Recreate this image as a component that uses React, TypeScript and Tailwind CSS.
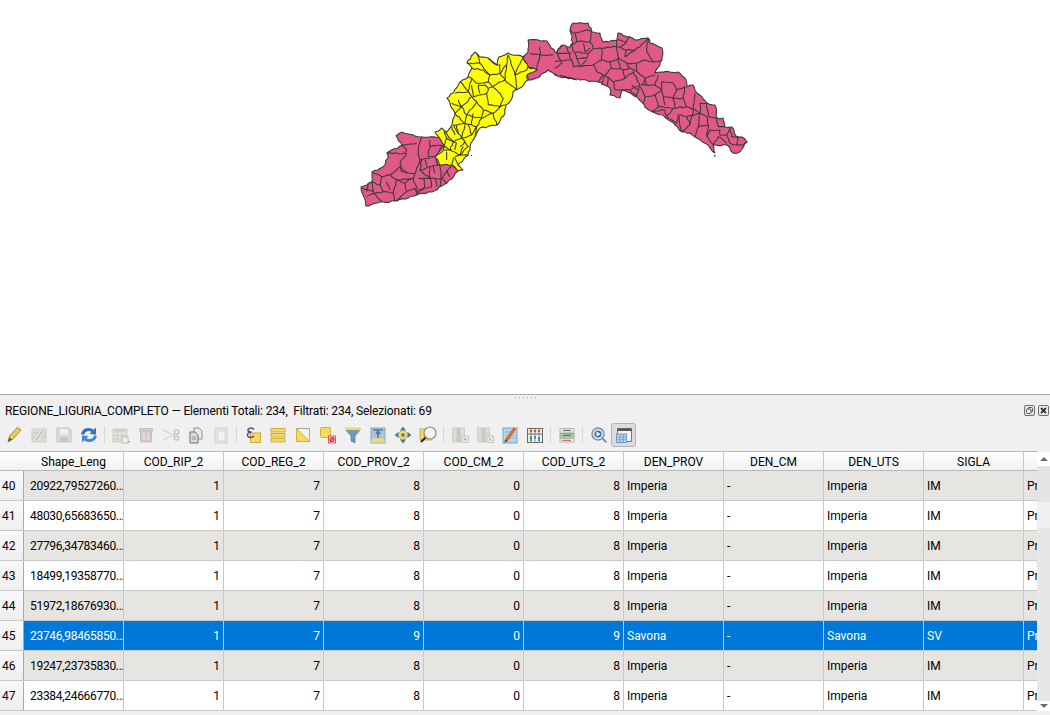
import type { ReactNode } from "react";

const westOutline =
  "361,187 372,182 372,172 383,167 388,158 387,153 402,145 396,136 402,132 415,136 422,137 440,137 444,145 435,157 438,165 452,165 458,171 447,183 432,192 417,195 397,201 383,202 377,203 366,206 364,197";
const yellowOutline =
  "435,157 444,145 435,132 442,128 447,132 452,125 455,113 447,98 453,93 460,82 468,77 472,68 467,63 475,52 480,57 488,58 497,65 499,57 505,55 508,53 523,57 528,67 537,70 527,75 528,80 520,88 513,92 512,98 506,105 505,113 497,125 480,128 475,137 470,147 468,155 458,165 463,170 458,171 452,165 438,165";
const eastOutline =
  "523,57 528,52 528,40 547,41 555,52 557,52 562,45 570,47 573,43 570,30 573,23 588,23 592,32 600,33 603,42 617,40 618,33 630,37 635,40 648,38 650,43 662,48 662,60 655,73 670,72 678,72 685,78 687,87 693,85 697,93 707,103 715,105 717,118 723,118 725,127 732,127 737,137 742,137 747,142 738,153 733,153 727,145 713,145 715,153 708,145 695,137 690,133 682,132 675,125 663,115 653,112 645,107 637,97 623,90 620,98 610,95 610,88 598,82 580,80 560,77 553,73 548,70 537,78 528,80 527,75 537,70 528,67";

// these are in zoomed coordinates, scaled down by the group transform
const westLines = [
  "M140 430L195 430L200 420L185 405L230 400",
  "M200 430L180 460L185 485L225 490L240 450L270 445",
  "M245 380L235 420L240 450",
  "M270 390L265 440L285 440",
  "M270 410L300 405",
  "M97 485L125 500L150 495L180 470",
  "M125 500L120 525L95 515L100 545L65 535",
  "M120 525L130 545L100 550L125 575",
  "M130 545L160 550L165 575",
  "M160 550L170 510L220 505L225 490",
  "M150 495L170 510",
  "M220 505L235 550",
  "M235 540L275 530L270 505L235 505",
  "M245 450L240 480L270 470L295 465",
  "M270 470L270 505L305 505L320 520",
  "M300 470L305 505L335 465",
  "M240 480L270 505",
  "M195 520L200 545L225 535",
  "M200 545L170 572",
  "M225 535L230 555",
  "M235 550L255 530",
  "M250 505L255 530",
  "M285 505L290 530",
  "M305 505L300 530",
  "M320 480L330 500",
  "M215 505L195 520",
  "M170 510L195 520",
  "M180 470L200 490",
  "M100 550L80 560",
  "M140 515L150 540",
  "M290 445L300 470",
  "M255 450L260 470",
  "M280 470L285 490",
  "M85 520L80 545",
];
const yellowLines = [
  "M382 160L420 160L450 195L480 190L480 165L470 165",
  "M395 175L430 180L450 195",
  "M480 190L500 165L505 135",
  "M495 210L500 165",
  "M450 195L445 215L410 220L395 205L385 200",
  "M480 190L495 210L530 240L525 195L560 180",
  "M445 215L470 240L490 265L480 290L497 285",
  "M495 210L445 235L435 225L415 225",
  "M395 205L385 245L345 250",
  "M385 245L395 260L365 290L335 280",
  "M395 225L400 260L440 250L445 285",
  "M415 225L420 250",
  "M440 250L445 235",
  "M445 285L480 290L460 310L430 300L410 275L395 260",
  "M365 290L380 315L410 275",
  "M380 315L375 340L340 345",
  "M375 340L410 350L425 325L460 310",
  "M380 315L425 325",
  "M460 310L470 345",
  "M375 340L365 385L340 345",
  "M365 385L395 375L410 350",
  "M312 365L340 395L365 385L385 410L360 435L330 420L310 420L285 440",
  "M340 395L330 420",
  "M312 365L320 385L310 420",
  "M360 435L340 445L335 465",
  "M385 435L360 435",
  "M320 385L350 400",
  "M560 180L565 170",
  "M345 310L365 290",
  "M345 310L375 340",
  "M335 350L345 375",
  "M350 345L355 370",
  "M300 405L335 420",
  "M345 420L350 400",
  "M375 395L360 410",
  "M385 345L395 375",
  "M400 310L395 345",
  "M430 300L425 325",
  "M355 270L365 290",
  "M420 160L410 130",
  "M470 165L445 145",
  "M525 195L550 140",
  "M505 135L525 195",
  "M360 215L385 245",
  "M410 350L405 380",
  "M360 435L370 410",
  "M320 425L320 450",
  "M355 465L345 445",
];
const eastLines = [
  "M120 60L135 70L170 60L185 65",
  "M135 70L140 95L125 105L130 125L175 130",
  "M140 95L180 95L190 115L215 115",
  "M215 115L215 150L190 165L200 185L220 195L205 215",
  "M175 130L170 145L140 145L135 130",
  "M140 145L150 170L170 150",
  "M215 115L260 110L265 145L240 155L215 150",
  "M260 90L260 110L290 120L315 120L330 110L355 85",
  "M290 95L270 115",
  "M355 85L350 125L370 155L395 150",
  "M265 145L290 160L320 160L340 150L370 155",
  "M320 160L320 185L345 205L375 195",
  "M240 155L245 175L225 195L250 215L285 205L280 180L300 175",
  "M285 205L310 185L330 225L300 240L280 240",
  "M250 215L255 240",
  "M345 205L335 225L375 225L385 195",
  "M375 225L395 240L395 215L430 220L440 240L430 260",
  "M395 240L375 255L385 290L365 305",
  "M345 260L375 255",
  "M320 260L330 230",
  "M400 260L430 265L460 265L470 290",
  "M465 230L460 265",
  "M385 290L430 295L470 290L490 300",
  "M495 250L490 295L510 310L510 280L530 280",
  "M430 295L410 320L440 340L445 315L470 320L480 345",
  "M470 320L510 310L530 320L535 345L505 350L495 380",
  "M530 280L535 320L560 325",
  "M535 345L530 380L540 360L570 360",
  "M560 325L565 350L585 350",
  "M570 360L570 375L590 375L600 355",
  "M590 375L600 400L620 405L625 380",
  "M620 405L640 405L652 395",
  "M550 405L565 380L590 400",
  "M30 110L30 135L70 135",
  "M30 135L20 180",
  "M0 130L30 135",
  "M95 105L80 130L125 130",
  "M110 110L125 150L75 155",
  "M80 130L95 160L75 175",
  "M125 150L130 170L190 165",
  "M190 115L175 130",
  "M185 65L180 95",
  "M160 100L165 125L180 115",
  "M260 90L290 95L300 80",
  "M290 120L285 140L315 120",
  "M265 145L270 175L245 175",
  "M290 160L300 175L320 185",
  "M270 175L280 180",
  "M225 195L215 225",
  "M235 200L230 230",
  "M255 240L280 240",
  "M300 240L320 260",
  "M305 225L325 240",
  "M330 230L345 260L340 280",
  "M345 205L350 225",
  "M400 260L395 240",
  "M405 285L400 260",
  "M365 305L405 300L410 320",
  "M440 240L465 230",
  "M430 260L435 295",
  "M490 300L480 345L455 365",
  "M445 315L455 365",
  "M510 310L505 350",
  "M530 380L550 405",
  "M600 355L605 380L625 380",
];

// small fixed-seed wobble so the borders don't look ruled
let seed = 7;
function wobble() {
  seed = (seed * 16807) % 2147483647;
  return (seed % 1000) / 500 - 1;
}

function roughen(pts: number[][], step: number, amp: number) {
  const out: number[][] = [];
  for (let i = 0; i < pts.length - 1; i++) {
    const [x1, y1] = pts[i];
    const [x2, y2] = pts[i + 1];
    const len = Math.hypot(x2 - x1, y2 - y1);
    const n = Math.max(1, Math.round(len / step));
    out.push([x1, y1]);
    for (let k = 1; k < n; k++) {
      const t = k / n;
      const d = wobble() * amp;
      out.push([x1 + (x2 - x1) * t - ((y2 - y1) / len) * d, y1 + (y2 - y1) * t + ((x2 - x1) / len) * d]);
    }
  }
  out.push(pts[pts.length - 1]);
  return out;
}

function roughOutline(points: string) {
  const pts = points.split(" ").map((p) => p.split(",").map(Number));
  return roughen([...pts, pts[0]], 3, 0.9)
    .map((p) => p.map((v) => v.toFixed(1)).join(","))
    .join(" ");
}

function roughLine(d: string) {
  const pts = d
    .slice(1)
    .split("L")
    .map((p) => p.split(" ").map(Number));
  return (
    "M" +
    roughen(pts, 9, 2)
      .map((p) => p.map((v) => v.toFixed(1)).join(" "))
      .join("L")
  );
}

const west = roughOutline(westOutline);
const yellow = roughOutline(yellowOutline);
const east = roughOutline(eastOutline);
const westPaths = [...westLines, ...yellowLines].map(roughLine);
const eastPaths = eastLines.map(roughLine);

function MapCanvas() {
  return (
    <svg className="block w-[1050px] h-[394px] bg-white" viewBox="0 0 1050 394">
      <g stroke="#3a3a3a" strokeWidth="1.1" strokeLinejoin="round">
        <polygon points={east} fill="#e15989" />
        <polygon points={west} fill="#e15989" />
        <polygon points={yellow} fill="#ffff00" />
      </g>
      <g fill="none" stroke="#3a3a3a" strokeWidth="3.2" strokeLinejoin="round" transform="translate(340 10) scale(0.3333)">
        {westPaths.map((d, i) => (
          <path key={i} d={d} />
        ))}
      </g>
      <g fill="none" stroke="#3a3a3a" strokeWidth="3.2" strokeLinejoin="round" transform="translate(530 10) scale(0.3333)">
        {eastPaths.map((d, i) => (
          <path key={i} d={d} />
        ))}
        <path d="M90 196L140 210" stroke="#222" strokeWidth="3" />
        <path d="M72 194L82 196" stroke="#222" strokeWidth="3" />
      </g>
      <rect x="471" y="155" width="1" height="1" fill="#333" />
      <rect x="714" y="155" width="1.5" height="1.5" fill="#444" />
    </svg>
  );
}

function Ico({ children }: { children: ReactNode }) {
  return (
    <div className="w-[25px] h-[24px] flex items-center justify-center shrink-0">
      <svg className="w-[18px] h-[18px]" viewBox="0 0 18 18">
        {children}
      </svg>
    </div>
  );
}

function Sep() {
  return <div className="w-[7px] h-[18px] shrink-0 flex justify-center"><div className="w-px h-full bg-[#d8d8d8]" /></div>;
}

function Toolbar() {
  return (
    <div className="h-[28px] mb-[2px] pl-[1px] flex items-center">
      {/* pencil */}
      <Ico>
        <polygon points="3,16 4.5,10 12.5,1.5 16,4 8,13" fill="#efcf45" stroke="#85763a" strokeWidth="0.8" />
        <polygon points="3,16 4.5,11.5 7,13.5" fill="#59544a" />
      </Ico>
      {/* edit many, disabled */}
      <Ico>
        <rect x="2" y="3" width="14" height="13" fill="#dedcd4" stroke="#d0cec6" />
        <path d="M2 7H16M2 11H16" stroke="#c9c7bf" />
        <path d="M6 14L14 3" stroke="#f4f4f2" strokeWidth="3.4" />
        <path d="M6 14L14 3" stroke="#c4c2ba" strokeWidth="2" />
      </Ico>
      {/* save, disabled */}
      <Ico>
        <path d="M2 2H14L16 4V16H2Z" fill="#dbdbdb" stroke="#c2c2c2" />
        <rect x="5" y="3" width="8" height="5" fill="#f1f1f1" />
        <rect x="5" y="11" width="8" height="5" fill="#c8c8c8" />
      </Ico>
      {/* reload */}
      <Ico>
        <path d="M2.5 8.5C3.5 3.5 9 2 13 5" fill="none" stroke="#2d75b8" strokeWidth="3" />
        <polygon points="16,1.5 16,8.5 9.5,8" fill="#2d75b8" />
        <path d="M15.5 9.5C14.5 14.5 9 16 5 13" fill="none" stroke="#3f8ccd" strokeWidth="3" />
        <polygon points="2,16.5 2,9.5 8.5,10" fill="#3f8ccd" />
      </Ico>
      <Sep />
      {/* add row, disabled */}
      <Ico>
        <rect x="1" y="3" width="14" height="13" fill="#e4e2da" stroke="#cfcdc5" />
        <rect x="1" y="3" width="14" height="3" fill="#d2d0c8" />
        <path d="M1 9.5H15M1 13H15M5.5 6V16M10 6V16" stroke="#cfcdc5" />
        <rect x="10" y="11" width="6" height="6" fill="#f2f2f0" stroke="#bcbcb6" />
        <path d="M16 15H18L17 17Z" fill="#8c8c8c" />
      </Ico>
      {/* delete, disabled */}
      <Ico>
        <rect x="2.5" y="2.5" width="13" height="2.5" fill="#d8cfcc" stroke="#c9bebb" />
        <path d="M3.5 5H14.5V16H3.5Z" fill="#d6c9c6" stroke="#c9bebb" />
        <path d="M7 7V14M11 7V14" stroke="#ece6e4" strokeWidth="1.4" />
      </Ico>
      {/* cut, disabled */}
      <Ico>
        <path d="M1 4L13 10M1 14L13 8" stroke="#d2d2d2" strokeWidth="1.3" />
        <circle cx="14.5" cy="6" r="2.2" fill="none" stroke="#bdbdbd" strokeWidth="1.2" />
        <circle cx="14.5" cy="12" r="2.2" fill="none" stroke="#bdbdbd" strokeWidth="1.2" />
      </Ico>
      {/* copy */}
      <Ico>
        <path d="M7 2H12L15 5V13H7Z" fill="#ebebeb" stroke="#8f8f8f" />
        <path d="M3 6H8L11 9V17H3Z" fill="#dcdcdc" stroke="#6f6f6f" />
        <path d="M5 11H9M5 13H9" stroke="#8f8f8f" />
      </Ico>
      {/* paste, disabled */}
      <Ico>
        <rect x="3" y="2" width="12" height="15" fill="#e4e4e4" stroke="#d0d0d0" />
        <rect x="6" y="5" width="7" height="10" fill="#f2f2f2" stroke="#d8d8d8" />
      </Ico>
      <Sep />
      {/* select by expression */}
      <Ico>
        <rect x="6.5" y="7" width="10" height="9.5" fill="#f3dc5f" stroke="#c4ab3f" />
        <path d="M10 3.5C8 1 3.5 2 4 4.5C4.3 6 6 6.2 7.5 6.3C5 6.3 3 7.5 3.5 9.5C4 12 8 12 10 10" fill="none" stroke="#6d3a85" strokeWidth="1.4" />
      </Ico>
      {/* select all */}
      <Ico>
        <rect x="2" y="2.5" width="14" height="3.4" fill="#f3dc5f" stroke="#c9b145" />
        <rect x="2" y="7.5" width="14" height="3.4" fill="#f3dc5f" stroke="#c9b145" />
        <rect x="2" y="12.5" width="14" height="3.4" fill="#f3dc5f" stroke="#c9b145" />
      </Ico>
      {/* invert */}
      <Ico>
        <rect x="2.5" y="2.5" width="13" height="13" fill="#f2f2f2" stroke="#a8a8a8" />
        <polygon points="2.5,2.5 15.5,15.5 2.5,15.5" fill="#f3dc5f" stroke="#c9b145" />
      </Ico>
      {/* deselect */}
      <Ico>
        <rect x="1.5" y="1.5" width="10" height="10" rx="1" fill="#f3dc5f" stroke="#c9b145" />
        <rect x="9.5" y="10" width="7" height="7" fill="#fbe9e9" stroke="#d8333a" strokeWidth="0.8" />
        <circle cx="13" cy="13.5" r="2" fill="none" stroke="#d8333a" strokeWidth="1.2" />
        <path d="M11 15.5L15 11.5" stroke="#d8333a" strokeWidth="1.2" />
      </Ico>
      {/* filter */}
      <Ico>
        <polygon points="1,3 17,3 11,10 11,17 7,15 7,10" fill="#6f97ba" stroke="#5b7f9e" strokeWidth="0.7" />
        <rect x="1" y="1.5" width="16" height="2.6" fill="#efd860" />
      </Ico>
      {/* move selection top */}
      <Ico>
        <rect x="2" y="2" width="14" height="15" fill="#a9c6dc" stroke="#8aa8bf" />
        <rect x="2.5" y="12.5" width="13" height="4" fill="#f0dc6a" />
        <path d="M4 4H14M9 4V12" stroke="#55799a" strokeWidth="1.6" />
        <polygon points="9,4 6,8 12,8" fill="#55799a" />
      </Ico>
      {/* pan to selected */}
      <Ico>
        <polygon points="9,3 15,9 9,15 3,9" fill="#f3dc5f" stroke="#c9b145" />
        <polygon points="9,0.5 12,4.5 6,4.5" fill="#3f79b5" />
        <polygon points="9,17.5 12,13.5 6,13.5" fill="#3f79b5" />
        <polygon points="0.5,9 4.5,6 4.5,12" fill="#3f79b5" />
        <polygon points="17.5,9 13.5,6 13.5,12" fill="#3f79b5" />
        <circle cx="9" cy="9" r="1.8" fill="#3f79b5" />
      </Ico>
      {/* zoom to selected */}
      <Ico>
        <rect x="1" y="3" width="11" height="11" fill="#f3dc5f" stroke="#c9b145" />
        <circle cx="11" cy="7" r="6" fill="#f4f4ee" stroke="#8d8d85" strokeWidth="1.2" />
        <path d="M6.5 11.5L2 16" stroke="#222" strokeWidth="2" />
      </Ico>
      <Sep />
      {/* new field, disabled */}
      <Ico>
        <rect x="1.5" y="2" width="12" height="14" fill="#dddbd4" stroke="#d0cec6" />
        <rect x="5.5" y="2" width="4" height="14" fill="#c9c7c0" />
        <rect x="11" y="10" width="6.5" height="6.5" fill="#f0f0ee" stroke="#c4c4c0" />
        <circle cx="14.2" cy="13.2" r="1.5" fill="#b4b4b0" />
      </Ico>
      {/* delete field, disabled */}
      <Ico>
        <rect x="1.5" y="2" width="12" height="14" fill="#dddbd4" stroke="#d0cec6" />
        <rect x="5.5" y="2" width="4" height="14" fill="#c9c7c0" />
        <rect x="11" y="10" width="6.5" height="6.5" fill="#f0f0ee" stroke="#c4c4c0" />
        <path d="M12.7 11.7L15.8 14.8M15.8 11.7L12.7 14.8" stroke="#adadad" />
      </Ico>
      {/* field calculator */}
      <Ico>
        <rect x="2" y="2" width="14" height="15" fill="#bcd3e6" stroke="#7ea3c3" />
        <path d="M4 6H14M4 9H14M4 12H14" stroke="#8eb0cc" />
        <path d="M5 15L14 2" stroke="#d56a28" strokeWidth="3" />
        <polygon points="3.5,17 4,13.5 6.5,15" fill="#4d4d4d" />
      </Ico>
      {/* abacus */}
      <Ico>
        <rect x="1.5" y="2.5" width="15" height="14" fill="#f0f0ea" stroke="#6b6b66" />
        <path d="M5 3V16M9 3V16M13 3V16" stroke="#9a9a94" />
        <circle cx="5" cy="5" r="1.3" fill="#c6504a" />
        <circle cx="9" cy="5" r="1.3" fill="#c6504a" />
        <circle cx="13" cy="5" r="1.3" fill="#c6504a" />
        <path d="M2 8H16" stroke="#6b6b66" />
        <path d="M5 10V15" stroke="#4e9b62" strokeWidth="2" />
        <path d="M9 10V13" stroke="#4e8ec4" strokeWidth="2" />
        <path d="M13 11V15" stroke="#4e8ec4" strokeWidth="2" />
      </Ico>
      <Sep />
      {/* conditional formatting */}
      <Ico>
        <rect x="2" y="2.5" width="14" height="3.6" fill="#f2f2f2" stroke="#b5b5b5" />
        <path d="M5 4.3H13" stroke="#555" />
        <rect x="2" y="7.5" width="14" height="3.6" fill="#a6d69b" stroke="#84b27a" />
        <path d="M5 9.3H13" stroke="#2f7a33" />
        <rect x="2" y="12.5" width="14" height="3.6" fill="#f2f2f2" stroke="#b5b5b5" />
        <path d="M4 14.3H13" stroke="#d8434a" />
      </Ico>
      <Sep />
      {/* actions */}
      <Ico>
        <circle cx="8" cy="8" r="6" fill="#dfe6ec" stroke="#7f8c98" strokeWidth="1.4" />
        <circle cx="8" cy="8" r="3.6" fill="#2f79ba" />
        <polygon points="6.5,5.5 10.5,8 6.5,10.5" fill="#fff" />
        <path d="M12 12L16.5 16.5" stroke="#8a9097" strokeWidth="2" />
      </Ico>
      {/* table view toggle, active */}
      <div className="w-[25px] h-[24px] flex items-center justify-center shrink-0 rounded-[3px] bg-[#dcdcdc] border border-[#b4b4b4]">
        <svg className="w-[18px] h-[18px]" viewBox="0 0 18 18">
          <rect x="2.5" y="2.5" width="14" height="13" fill="#f4f4f4" stroke="#777" />
          <rect x="2.5" y="2.5" width="14" height="2.5" fill="#555" />
          <rect x="1.5" y="8" width="10" height="8.5" fill="#bcd6ec" stroke="#6d9cc2" />
          <path d="M1.5 11H11.5M1.5 13.7H11.5M5 8V16.5M8.3 8V16.5" stroke="#6d9cc2" strokeWidth="0.8" />
        </svg>
      </div>
    </div>
  );
}

const columns = ["Shape_Leng", "COD_RIP_2", "COD_REG_2", "COD_PROV_2", "COD_CM_2", "COD_UTS_2", "DEN_PROV", "DEN_CM", "DEN_UTS", "SIGLA"];

const rows = [
  { n: 40, shape: "20922,79527260...", prov: 8, name: "Imperia", sigla: "IM" },
  { n: 41, shape: "48030,65683650...", prov: 8, name: "Imperia", sigla: "IM" },
  { n: 42, shape: "27796,34783460...", prov: 8, name: "Imperia", sigla: "IM" },
  { n: 43, shape: "18499,19358770...", prov: 8, name: "Imperia", sigla: "IM" },
  { n: 44, shape: "51972,18676930...", prov: 8, name: "Imperia", sigla: "IM" },
  { n: 45, shape: "23746,98465850...", prov: 9, name: "Savona", sigla: "SV" },
  { n: 46, shape: "19247,23735830...", prov: 8, name: "Imperia", sigla: "IM" },
  { n: 47, shape: "23384,24666770...", prov: 8, name: "Imperia", sigla: "IM" },
];

function Cell({ children, right }: { children?: ReactNode; right?: boolean }) {
  return (
    <div className={`w-[100px] shrink-0 h-full border-r border-[#c8c8c8] flex items-center px-[3px] whitespace-nowrap overflow-hidden ${right ? "justify-end" : ""}`}>
      {children}
    </div>
  );
}

function AttributeTable() {
  return (
    <div className="flex">
      <div className="w-[1037px] overflow-hidden">
        <div className="flex h-[20px] border-t border-b border-t-[#b9b9b9] border-b-[#b9b9b9] bg-linear-to-b from-white to-[#f1f1f1]">
          <div className="w-[24px] shrink-0" />
          {columns.map((c) => (
            <div key={c} className="w-[100px] shrink-0 border-r border-[#c8c8c8] flex items-center justify-center pt-px">
              {c}
            </div>
          ))}
          <div className="w-[13px] shrink-0" />
        </div>
        {rows.map((r, i) => {
          const selected = r.n === 45;
          const rowColor = selected ? "bg-[#0078d7] text-white" : i % 2 === 0 ? "bg-[#e7e5e2] text-black" : "bg-white text-black";
          return (
            <div key={r.n} className="flex h-[30px] border-b border-[#c8c8c8]">
              <div className="w-[24px] shrink-0 border-r border-[#a8a8a8] bg-linear-to-b from-[#f8f8f8] to-[#efefef] flex items-center pl-[2px] text-black">
                {r.n}
              </div>
              <div className={`flex h-full ${rowColor}`}>
                <Cell>
                  <span className="pl-[3px] tracking-[-0.3px]">{r.shape}</span>
                </Cell>
                <Cell right>1</Cell>
                <Cell right>7</Cell>
                <Cell right>{r.prov}</Cell>
                <Cell right>0</Cell>
                <Cell right>{r.prov}</Cell>
                <Cell>{r.name}</Cell>
                <Cell>-</Cell>
                <Cell>{r.name}</Cell>
                <Cell>{r.sigla}</Cell>
                <div className="w-[13px] shrink-0 pl-[3px] flex items-center overflow-hidden whitespace-nowrap">Provincia</div>
              </div>
            </div>
          );
        })}
      </div>
      <div className="w-[13px] shrink-0 flex flex-col bg-[#f0f0f0] mt-px">
        <div className="h-[14px] bg-white flex items-center justify-center">
          <div className="w-0 h-0 border-x-[4px] border-x-transparent border-b-[4px] border-b-[#6b6b6b]" />
        </div>
        <div className="h-[36px] bg-[#e4e4e4]" />
        <div className="h-[26px] bg-[#f0f0f0]" />
        <div className="flex-1 bg-[#e7e7e7]" />
        <div className="h-[10px] bg-white flex items-center justify-center">
          <div className="w-0 h-0 border-x-[4px] border-x-transparent border-t-[4px] border-t-[#6b6b6b]" />
        </div>
      </div>
    </div>
  );
}

export default function App() {
  return (
    <div className="w-[1050px] h-[715px] overflow-hidden bg-white flex flex-col text-[12px] text-black font-['Roboto',sans-serif]">
      <MapCanvas />
      <div className="flex-1 flex flex-col bg-[#f0f0f0] border-t border-[#a9a9a9]">
        <div className="h-[5px] flex items-center justify-center gap-[2px]">
          <div className="w-px h-px bg-[#a0a0a0]" />
          <div className="w-px h-px bg-[#a0a0a0] ml-px" />
          <div className="w-px h-px bg-[#a0a0a0] ml-px" />
          <div className="w-px h-px bg-[#a0a0a0] ml-px" />
          <div className="w-px h-px bg-[#a0a0a0] ml-px" />
          <div className="w-px h-px bg-[#a0a0a0] ml-px" />
        </div>
        <div className="h-[21px] flex items-center justify-between pl-[5px] pr-[1px]">
          <span className="whitespace-pre tracking-[-0.15px]">REGIONE_LIGURIA_COMPLETO — Elementi Totali: 234,  Filtrati: 234, Selezionati: 69</span>
          <div className="flex gap-[3px]">
            <svg className="w-[11px] h-[11px]" viewBox="0 0 11 11">
              <rect x="0.5" y="0.5" width="10" height="10" rx="1.5" fill="#ececec" stroke="#6f6f6f" />
              <rect x="4" y="2.5" width="4.5" height="4.5" rx="1" fill="none" stroke="#555" />
              <rect x="2.5" y="4" width="4.5" height="4.5" rx="1" fill="#ececec" stroke="#555" />
            </svg>
            <svg className="w-[11px] h-[11px]" viewBox="0 0 11 11">
              <rect x="0.5" y="0.5" width="10" height="10" rx="1.5" fill="#ececec" stroke="#6f6f6f" />
              <path d="M3 3L8 8M8 3L3 8" stroke="#333" strokeWidth="1.8" />
            </svg>
          </div>
        </div>
        <Toolbar />
        <AttributeTable />
      </div>
    </div>
  );
}
